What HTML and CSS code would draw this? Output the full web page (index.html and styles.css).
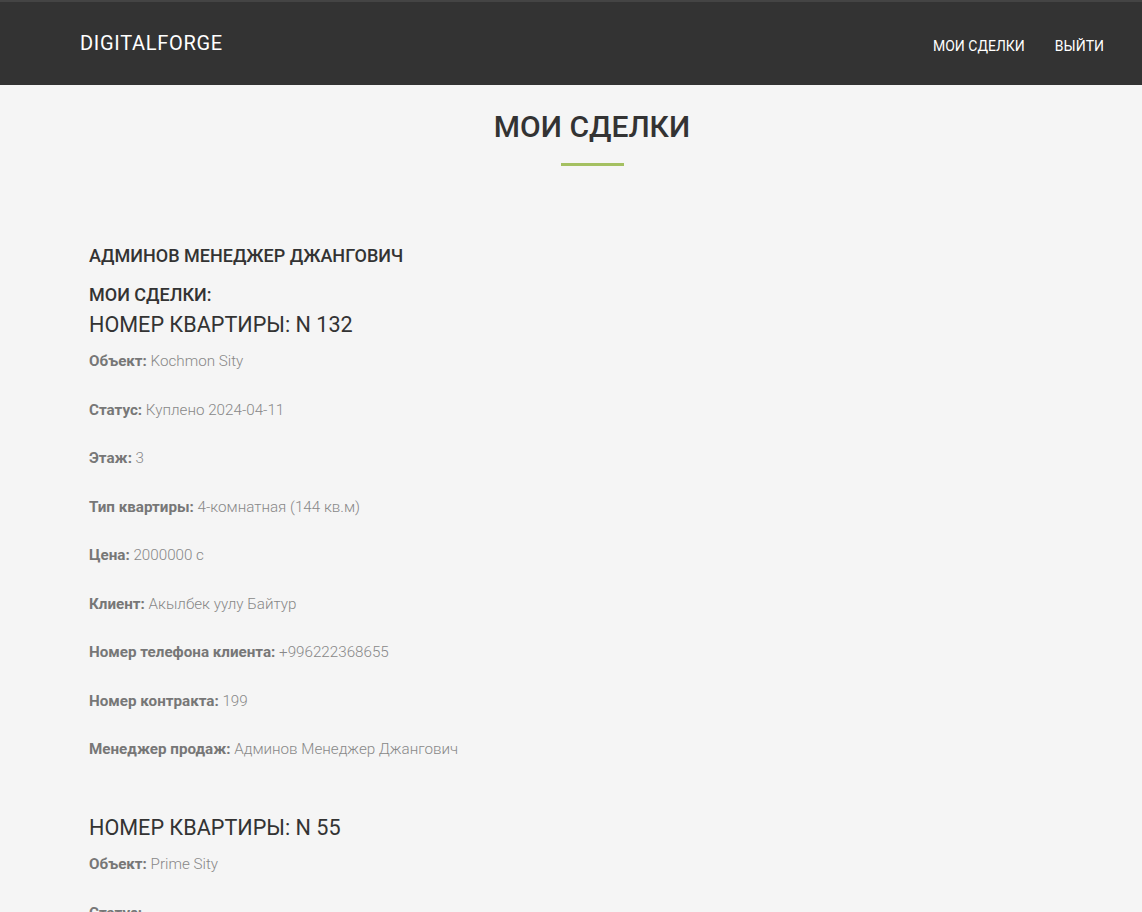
FILE: index.html
```html
<!DOCTYPE html>
<html lang="ru">
<head>
<meta charset="utf-8">
<title>Мои сделки</title>
<link rel="stylesheet" href="styles.css">
</head>
<body>
<header class="navbar">
  <a class="brand" href="#">DIGITALFORGE</a>
  <nav class="nav">
    <a href="#">Мои сделки</a>
    <a href="#">Выйти</a>
  </nav>
</header>
<main class="content">
  <div class="section-title">
    <h1>Мои сделки</h1>
    <span class="underline"></span>
  </div>
  <section class="deals">
    <h3 class="manager">Админов Менеджер Джангович</h3>
    <h3 class="subtitle">Мои сделки:</h3>

    <article class="deal">
      <h2 class="deal-title">Номер квартиры: N 132</h2>
      <p><b>Объект:</b> Kochmon Sity</p>
      <p><b>Статус:</b> Куплено 2024-04-11</p>
      <p><b>Этаж:</b> 3</p>
      <p><b>Тип квартиры:</b> 4-комнатная (144 кв.м)</p>
      <p><b>Цена:</b> 2000000 с</p>
      <p><b>Клиент:</b> Акылбек уулу Байтур</p>
      <p><b>Номер телефона клиента:</b> +996222368655</p>
      <p><b>Номер контракта:</b> 199</p>
      <p><b>Менеджер продаж:</b> Админов Менеджер Джангович</p>
    </article>

    <article class="deal">
      <h2 class="deal-title">Номер квартиры: N 55</h2>
      <p><b>Объект:</b> Prime Sity</p>
      <p><b>Статус:</b> </p>
      <p><b>Этаж:</b> 5</p>
    </article>
  </section>
</main>
</body>
</html>
```

FILE: styles.css
```css
html, body {
  margin: 0;
  padding: 0;
}
body {
  background: #f5f5f5;
  font-family: Roboto, "Noto Sans", "Liberation Sans", sans-serif;
  color: #333;
}
.navbar {
  height: 83px;
  background: #333;
  border-top: 2px solid #444;
  display: flex;
  align-items: center;
  justify-content: space-between;
  padding: 0 38px 0 80px;
}
.brand {
  color: #fff;
  text-decoration: none;
  font-size: 20px;
  letter-spacing: 0.7px;
  margin-top: -1px;
}
.nav {
  display: flex;
  gap: 30px;
  margin-top: 4px;
}
.nav a {
  color: #fff;
  text-decoration: none;
  text-transform: uppercase;
  font-size: 14px;
  letter-spacing: 0;
}
.section-title {
  text-align: center;
  padding-top: 23px;
  padding-left: 42px;
}
.section-title h1 {
  margin: 0;
  font-size: 30px;
  font-weight: 500;
  text-transform: uppercase;
  color: #333;
  line-height: 38px;
}
.underline {
  display: block;
  width: 63px;
  height: 3px;
  background: #a4c061;
  margin: 17px auto 0;
}
.deals {
  padding: 79px 89px 0;
}
.manager, .subtitle {
  margin: 0;
  font-size: 18px;
  font-weight: 500;
  text-transform: uppercase;
  color: #333;
  line-height: 22px;
}
.subtitle {
  margin-top: 17px;
}
.deal-title {
  margin: 5px 0 10px;
  font-size: 21.6px;
  font-weight: 400;
  text-transform: uppercase;
  color: #333;
  line-height: 28px;
}
.deal {
  margin-bottom: 53px;
}
.deal p {
  margin: 0 0 24.5px;
  font-size: 15.2px;
  line-height: 24px;
  color: #888;
  font-weight: 300;
}
.deal p b {
  color: #777;
  font-weight: 700;
}
```
